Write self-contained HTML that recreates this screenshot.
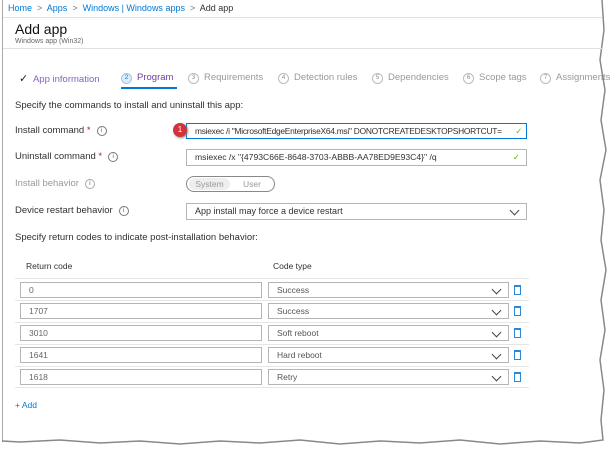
<!DOCTYPE html>
<html><head><style>
body{margin:0;width:615px;height:455px;background:#fff;font-family:"Liberation Sans",sans-serif;position:relative;overflow:hidden;color:#323130}
.a{position:absolute;white-space:nowrap}
.lbl{font-size:9.5px;color:#323130}
.inp{position:absolute;border:1px solid #b5b5b5;background:#fff;box-sizing:border-box;font-size:9px;color:#323130;padding-left:8px;line-height:14px;white-space:nowrap;overflow:hidden}
.info{display:inline-block;width:8px;height:8px;border:1px solid #777;border-radius:50%;font-size:6px;text-align:center;line-height:8px;color:#555;margin-left:6px;vertical-align:1px}
.tab{font-size:9.5px;color:#999}
.num{display:inline-block;width:9px;height:9px;border:1px solid #bbb;border-radius:50%;font-size:6px;text-align:center;line-height:9px;margin-right:5px;vertical-align:1px;color:#888}
.chev{position:absolute;right:8px;top:3px;width:6px;height:6px;border-right:1px solid #444;border-bottom:1px solid #444;transform:rotate(45deg)}
.rl{position:absolute;left:15px;width:514px;height:0;border-top:1px solid #e5e5e5}
.trash{position:absolute;left:514px;width:7px;height:10px;border:1.5px solid #2b88d8;border-top-width:2px;box-sizing:border-box}
.ri{position:absolute;left:20px;width:242px;height:16px;border:1px solid #b5b5b5;box-sizing:border-box;font-size:8.5px;line-height:14px;color:#666;padding-left:8px}
.rs{position:absolute;left:268px;width:241px;height:16px;border:1px solid #b5b5b5;box-sizing:border-box;font-size:8.5px;line-height:14px;color:#555;padding-left:8px}
</style></head><body>
<div class="a" style="left:2px;top:0;width:1px;height:445px;background:#aaa"></div>
<svg class="a" style="left:0;top:0" width="615" height="455"><polyline points="602,0 604,30 600,60 605,90 601,120 606,150 600,180 604,210 601,240 606,270 601,300 605,330 600,360 604,390 601,420 603,440 580,443 540,441 500,444 460,440 420,443 380,441 340,444 300,440 260,443 220,441 180,444 140,441 100,443 60,440 20,442 2,441" fill="none" stroke="#888" stroke-width="1.5"/><polygon points="603,0 615,0 615,455 0,455 0,442 20,443 60,441 100,444 140,442 180,445 220,442 260,444 300,441 340,445 380,442 420,444 460,441 500,445 540,442 580,444 604,441 602,420 605,390 601,360 606,330 602,300 607,270 602,240 605,210 601,180 607,150 602,120 606,90 601,60 605,30" fill="#fff"/></svg>
<div class="a" style="left:8px;top:3px;font-size:9px;color:#0078d4">Home <span style="color:#777">&nbsp;&gt;&nbsp;</span> Apps <span style="color:#777">&nbsp;&gt;&nbsp;</span> Windows | Windows apps <span style="color:#777">&nbsp;&gt;&nbsp;</span> <span style="color:#323130">Add app</span></div>
<div class="a" style="left:3px;top:17px;width:599px;height:1px;background:#e1e1e1"></div>
<div class="a" style="left:15px;top:21px;font-size:14px;color:#111">Add app</div>
<div class="a" style="left:15px;top:38px;font-size:7px;color:#666">Windows app (Win32)</div>
<div class="a" style="left:3px;top:48px;width:599px;height:1px;background:#e1e1e1"></div>
<div class="a" style="left:19px;top:72px;font-size:9.5px;color:#8661c5"><span style="color:#222;font-size:11px">✓</span>&nbsp; App information</div>
<div class="a tab" style="left:121px;top:72px;color:#6b3fa0"><span class="num" style="border-color:#9cc6ee;background:#deecf9;color:#0078d4">2</span>Program</div>
<div class="a" style="left:121px;top:87px;width:56px;height:2px;background:#0078d4"></div>
<div class="a tab" style="left:188px;top:72px"><span class="num">3</span>Requirements</div>
<div class="a tab" style="left:278px;top:72px"><span class="num">4</span>Detection rules</div>
<div class="a tab" style="left:372px;top:72px"><span class="num">5</span>Dependencies</div>
<div class="a tab" style="left:463px;top:72px"><span class="num">6</span>Scope tags</div>
<div class="a tab" style="left:540px;top:72px"><span class="num">7</span>Assignments</div>
<div class="a lbl" style="left:15px;top:100px">Specify the commands to install and uninstall this app:</div>
<div class="a lbl" style="left:15px;top:125px">Install command <span style="color:#a4262c">*</span><span class="info">i</span></div>
<div class="inp" style="left:186px;top:123px;width:341px;height:16px;border-color:#0078d4;font-size:8.4px;letter-spacing:-0.25px">msiexec /i "MicrosoftEdgeEnterpriseX64.msi" DONOTCREATEDESKTOPSHORTCUT=<span style="position:absolute;right:4px;color:#6bb700;background:#fff">✓</span></div>
<div class="a" style="left:173px;top:123px;width:14px;height:14px;border-radius:50%;background:#d13438;color:#fff;font-size:8px;text-align:center;line-height:14px;box-shadow:1px 1px 2px #888">1</div>
<div class="a lbl" style="left:15px;top:151px">Uninstall command <span style="color:#a4262c">*</span><span class="info">i</span></div>
<div class="inp" style="left:186px;top:149px;width:341px;height:17px;font-size:8.6px">msiexec /x "{4793C66E-8648-3703-ABBB-AA78ED9E93C4}" /q<span style="position:absolute;right:6px;color:#6bb700">✓</span></div>
<div class="a lbl" style="left:15px;top:178px;color:#999">Install behavior<span class="info" style="border-color:#aaa">i</span></div>
<div class="a" style="left:186px;top:176px;width:89px;height:16px;border:1px solid #888;border-radius:9px;box-sizing:border-box"></div>
<div class="a" style="left:189px;top:178px;width:41px;height:12px;border-radius:7px;background:#eee;font-size:8.5px;color:#999;text-align:center;line-height:12px">System</div>
<div class="a" style="left:243px;top:179px;font-size:8.5px;color:#999">User</div>
<div class="a lbl" style="left:15px;top:205px">Device restart behavior<span class="info">i</span></div>
<div class="inp" style="left:186px;top:203px;width:341px;height:17px">App install may force a device restart<span class="chev"></span></div>
<div class="a lbl" style="left:15px;top:232px">Specify return codes to indicate post-installation behavior:</div>
<div class="a" style="left:26px;top:261px;font-size:8.5px">Return code</div>
<div class="a" style="left:273px;top:261px;font-size:8.5px">Code type</div>
<div class="rl" style="top:278px"></div>
<div class="ri" style="top:282px">0</div><div class="rs" style="top:282px">Success<span class="chev"></span></div><div class="trash" style="top:285px"></div>
<div class="rl" style="top:300px"></div>
<div class="ri" style="top:303px">1707</div><div class="rs" style="top:303px">Success<span class="chev"></span></div><div class="trash" style="top:306px"></div>
<div class="rl" style="top:322px"></div>
<div class="ri" style="top:325px">3010</div><div class="rs" style="top:325px">Soft reboot<span class="chev"></span></div><div class="trash" style="top:328px"></div>
<div class="rl" style="top:344px"></div>
<div class="ri" style="top:347px">1641</div><div class="rs" style="top:347px">Hard reboot<span class="chev"></span></div><div class="trash" style="top:350px"></div>
<div class="rl" style="top:366px"></div>
<div class="ri" style="top:369px">1618</div><div class="rs" style="top:369px">Retry<span class="chev"></span></div><div class="trash" style="top:372px"></div>
<div class="rl" style="top:387px"></div>
<div class="a" style="left:15px;top:400px;font-size:8.5px;color:#0078d4">+ Add</div>
</body></html>
